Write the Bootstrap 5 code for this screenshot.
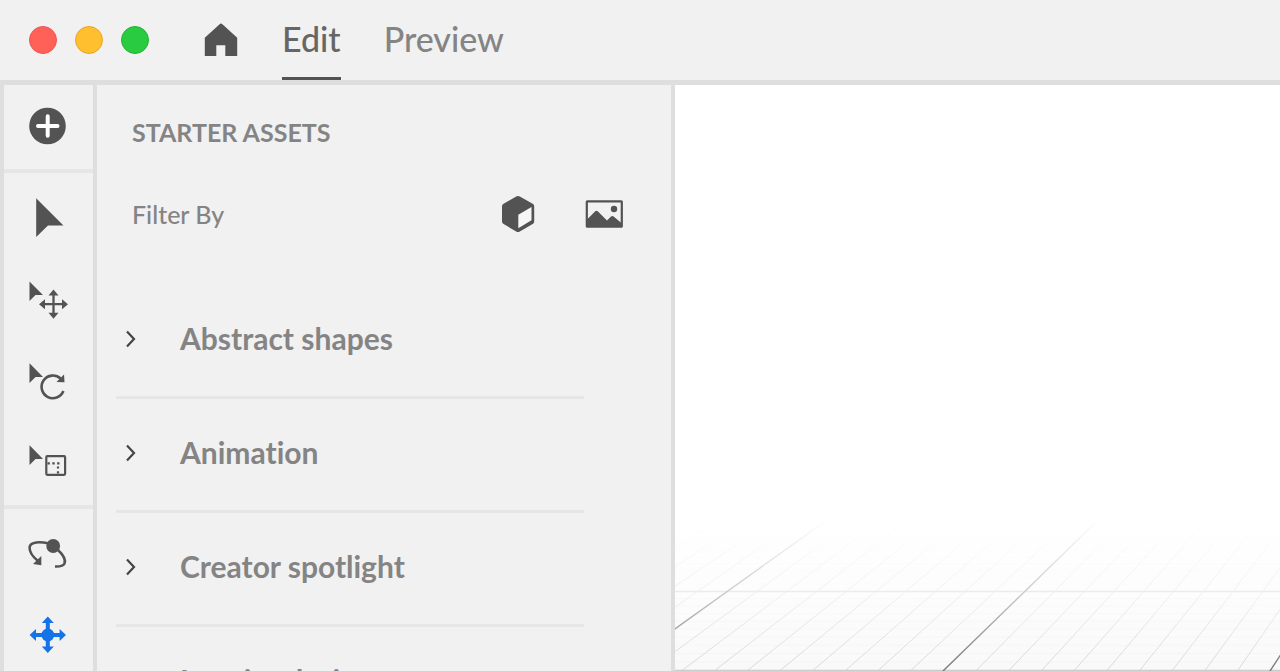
<!DOCTYPE html>
<html lang="en">
<head>
<meta charset="utf-8">
<meta name="viewport" content="width=device-width, initial-scale=1">
<title>Starter assets</title>
<link rel="stylesheet" href="https://cdn.jsdelivr.net/npm/bootstrap@5.3.0/dist/css/bootstrap.min.css">
<style>
  :root { --ink: #535353; --muted-ink: #848484; --chrome: #f1f1f1; --rule: #dedede; --soft-rule: #e6e6e6; }
  body { font-family: Lato, "Open Sans", sans-serif; font-weight: 500; background: var(--chrome); color: var(--muted-ink); }
  button, .btn { --bs-btn-border-width: 0; }
  .titlebar { border-bottom: 5px solid var(--rule); height: 85px; padding-left: 29px; }
  .lights { gap: 18px; margin-right: 55px; }
  .light { width: 28px; height: 28px; border-radius: 50%; border: 1px solid; padding: 0; }
  .light-close { background: #ff6159; border-color: #ee5550; }
  .light-min { background: #ffbf2f; border-color: #e5a62c; }
  .light-max { background: #29cc41; border-color: #22b236; }
  .home { margin-right: 44px; }
  .modes { gap: 43px; }
  .modes .nav-link { font-size: 34px; line-height: 77px; padding: 0; color: var(--muted-ink); border-bottom: 3px solid transparent; }
  .modes .nav-link.active { color: #666; border-color: var(--ink); }
  .workspace { min-height: 0; border-left: 4px solid var(--rule); }
  .rail { width: 93px; border-right: 4px solid var(--rule); color: var(--ink); }
  .tool { display: block; width: 100%; padding: 0; border: 0; border-radius: 0; background: none; color: inherit; }
  .tool svg { display: block; }
  .tool.active { color: #1473e6; }
  .tool-group { border-bottom: 4px solid var(--soft-rule); padding: 3px 0 1px; }
  .tool-group:last-child { border-bottom: 0; }
  .assets { width: 578px; border-right: 4px solid var(--rule); padding: 23px 0 0 19px; }
  .assets-title { font-size: 25px; line-height: 48px; margin: 0 0 33px 16px; font-weight: 700; }
  .filter { font-size: 25px; line-height: 50px; margin: 0 48px 46px 16px; }
  .filter-icons { gap: 50px; color: var(--ink); }
  .groups { margin-right: 87px; }
  .group-row { display: flex; align-items: center; width: 100%; height: 114px; padding: 0 0 4px 9px; gap: 44px; border: 0; border-bottom: 3px solid var(--soft-rule); background: none; color: inherit; font-size: 30px; font-weight: 700; font-variant-ligatures: none; text-align: left; }
  .group-row svg { color: #444; flex: none; }
  .scene { min-width: 0; background: #fff; }
</style>
</head>
<body class="vh-100 overflow-hidden d-flex flex-column">
<header class="titlebar d-flex align-items-center flex-shrink-0">
  <div class="lights d-flex">
    <button class="light light-close" aria-label="Close"></button>
    <button class="light light-min" aria-label="Minimize"></button>
    <button class="light light-max" aria-label="Zoom"></button>
  </div>
  <button class="home btn p-0" aria-label="Home">
    <svg class="d-block" width="34" height="34" viewBox="0 0 34 34" fill="#535353"><path d="M15.6 1.2Q17 0 18.400 1.200L33.200 14.800V33H21.300V22.200H12.300V33H.8V14.800Z"/></svg>
  </button>
  <nav class="modes nav flex-nowrap">
    <a class="nav-link active" href="#" aria-current="page">Edit</a>
    <a class="nav-link" href="#">Preview</a>
  </nav>
</header>

<div class="workspace d-flex flex-grow-1">
  <aside class="rail flex-shrink-0" aria-label="Tools">
    <div class="tool-group">
      <button class="tool" aria-label="Add"><svg width="88" height="80" viewBox="4 88 88 80"><circle cx="47.500" cy="126" r="18.300" fill="currentColor"/><path d="M38 126H57.500M47.700 116.200V135.800" stroke="#fff" stroke-width="4" stroke-linecap="round"/></svg></button>
    </div>
    <div class="tool-group">
      <button class="tool" aria-label="Select"><svg width="88" height="82" viewBox="4 176 88 82"><path d="M36.200 198.300V237L48 225.600H63.500Z" fill="currentColor"/></svg></button>
      <button class="tool" aria-label="Move"><svg width="88" height="82" viewBox="4 258 88 82"><path d="M29.500 281.500V301L35.500 295H43Z" fill="currentColor"/><path d="M43 304.200H64M53.500 294V315" stroke="currentColor" stroke-width="2.300"/><path d="M53.500 289.500l5 6h-10zM53.500 318.800l-5-6h10zM39 304.200l6-5v10zM68 304.200l-6-5v10z" fill="currentColor"/></svg></button>
      <button class="tool" aria-label="Rotate"><svg width="88" height="82" viewBox="4 340 88 82"><path d="M29.500 363.300V383L35.500 377H43Z" fill="currentColor"/><path d="M60.500 378.500A11.300 11.300 0 1 0 63.400 391" fill="none" stroke="currentColor" stroke-width="2.600"/><path d="M64 374.500L64.500 382.300L56.500 382Z" fill="currentColor"/></svg></button>
      <button class="tool" aria-label="Scale"><svg width="88" height="82" viewBox="4 422 88 82"><path d="M29.500 445.300V465L35.500 459H43Z" fill="currentColor"/><rect x="46.300" y="456.200" width="18.800" height="18.600" rx="1" fill="none" stroke="currentColor" stroke-width="2.200"/><path d="M47.500 463.300H59.500" stroke="currentColor" stroke-width="2.200" stroke-dasharray="2.400 2.400"/><path d="M58 466.400V474" stroke="currentColor" stroke-width="2.200" stroke-dasharray="2.200 2.600"/></svg></button>
    </div>
    <div class="tool-group">
      <button class="tool" aria-label="Orbit"><svg width="88" height="82" viewBox="4 512 88 82"><path d="M49 543.500C40 541.500 30.500 541.500 29.600 547C29 552 33 557 38.500 561.500M57 549C63 554.500 66 560 64.500 563.500C63 566.500 59.500 566.700 55 566.500" fill="none" stroke="currentColor" stroke-width="2.600"/><circle cx="53.200" cy="546" r="6.900" fill="currentColor"/><path d="M41.300 556V565.300L33 564Z" fill="currentColor"/></svg></button>
      <button class="tool active" aria-label="Pan"><svg width="88" height="82" viewBox="4 594 88 82"><path d="M34 635H62M47.800 621V649" stroke="currentColor" stroke-width="4"/><circle cx="47.800" cy="635" r="6.500" fill="currentColor"/><path d="M47.800 616.500l6 6.500h-12zM47.800 653l-6-6.500h12zM29.600 635l6.400-6v12zM66 635l-6.400-6v12z" fill="currentColor"/></svg></button>
    </div>
  </aside>

  <section class="assets flex-shrink-0">
    <h1 class="assets-title">STARTER ASSETS</h1>
    <div class="filter d-flex justify-content-between align-items-center">
      <span>Filter By</span>
      <div class="filter-icons d-flex align-items-center">
        <button class="btn p-0 text-reset" aria-label="Models"><svg class="d-block" width="34" height="38" viewBox="0 0 34 38"><path d="M15.200 1.500Q17 .5 18.800 1.500L31.700 8.700Q33.200 9.600 33.200 11.300V26.500Q33.200 28.200 31.700 29.100L18.800 36.500Q17 37.500 15.200 36.500L2.600 29.100Q1 28.200 1 26.500V11.300Q1 9.600 2.600 8.700Z" fill="currentColor"/><path d="M17.300 19.800L30.500 12V25.300L17.300 33.200Z" fill="#f6f6f6"/></svg></button>
        <button class="btn p-0 text-reset" aria-label="Images"><svg class="d-block" width="38" height="28" viewBox="0 0 38 28"><rect x="1.800" y="1.300" width="35" height="25.400" rx=".5" fill="none" stroke="currentColor" stroke-width="2.200"/><path d="M1.500 20L10 11.500Q11.500 10 13 11.500L22 20.500L26 16.500Q27.300 15.400 28.600 16.500L37 23.500V27H1.500Z" fill="currentColor"/><circle cx="29" cy="9" r="3.200" fill="currentColor"/></svg></button>
      </div>
    </div>
    <div class="groups">
      <button class="group-row" aria-expanded="false"><svg width="11" height="18" viewBox="0 0 11 18"><path d="M2 1.500L9 9L2 16.500" fill="none" stroke="currentColor" stroke-width="2.200"/></svg>Abstract shapes</button>
      <button class="group-row" aria-expanded="false"><svg width="11" height="18" viewBox="0 0 11 18"><path d="M2 1.500L9 9L2 16.500" fill="none" stroke="currentColor" stroke-width="2.200"/></svg>Animation</button>
      <button class="group-row" aria-expanded="false"><svg width="11" height="18" viewBox="0 0 11 18"><path d="M2 1.500L9 9L2 16.500" fill="none" stroke="currentColor" stroke-width="2.200"/></svg>Creator spotlight</button>
      <button class="group-row" aria-expanded="false"><svg width="11" height="18" viewBox="0 0 11 18"><path d="M2 1.500L9 9L2 16.500" fill="none" stroke="currentColor" stroke-width="2.200"/></svg>Interior design</button>
    </div>
  </section>

  <main class="scene flex-grow-1" aria-label="Canvas">
    <svg class="d-block w-100 h-100" viewBox="675 85 605 586" preserveAspectRatio="xMinYMax slice">
      <defs>
        <linearGradient id="haze" gradientUnits="userSpaceOnUse" x1="0" y1="520" x2="0" y2="671">
          <stop offset="0" stop-color="#fff" stop-opacity="0"/>
          <stop offset=".5" stop-color="#fff" stop-opacity=".4"/>
          <stop offset="1" stop-color="#fff"/>
        </linearGradient>
        <mask id="fade" maskUnits="userSpaceOnUse" x="675" y="520" width="605" height="151"><rect x="675" y="520" width="605" height="151" fill="url(#haze)"/></mask>
      </defs>
      <g mask="url(#fade)" fill="none">
        <rect x="675" y="520" width="605" height="151" fill="#f9f9f9"/>
        <path id="minorRows" stroke="#f3f3f3"/>
        <path id="minorRays" stroke="#d8d8d8"/>
        <path id="majorRows" stroke="#ccc" stroke-width="1.500"/>
        <path id="majorRays" stroke="#777" stroke-width="1.400"/>
      </g>
    </svg>
  </main>
</div>
<script src="https://cdn.jsdelivr.net/npm/bootstrap@5.3.0/dist/js/bootstrap.bundle.min.js"></script>
<script>
  // Ground plane in one-point perspective; every tenth line is a major one.
  const eye = { x: 1851, y: -213 }, near = 671, far = 520;
  const d = { minorRows: '', minorRays: '', majorRows: '', majorRays: '' };
  for (let i = -20; i <= 20; i++) {
    const x = 943 + i * 32.7;
    const t = (near - far) / (near - eye.y);
    d[i % 10 ? 'minorRays' : 'majorRays'] += `M${x} ${near}L${x + (eye.x - x) * t} ${far}`;
  }
  for (let i = 0; i <= 20; i++) {
    const y = 1 / (1 / 883.5 + i * 0.00001113) + eye.y;
    d[i % 10 ? 'minorRows' : 'majorRows'] += `M675 ${y}H1280`;
  }
  for (const id in d) document.getElementById(id).setAttribute('d', d[id]);
</script>
</body>
</html>
